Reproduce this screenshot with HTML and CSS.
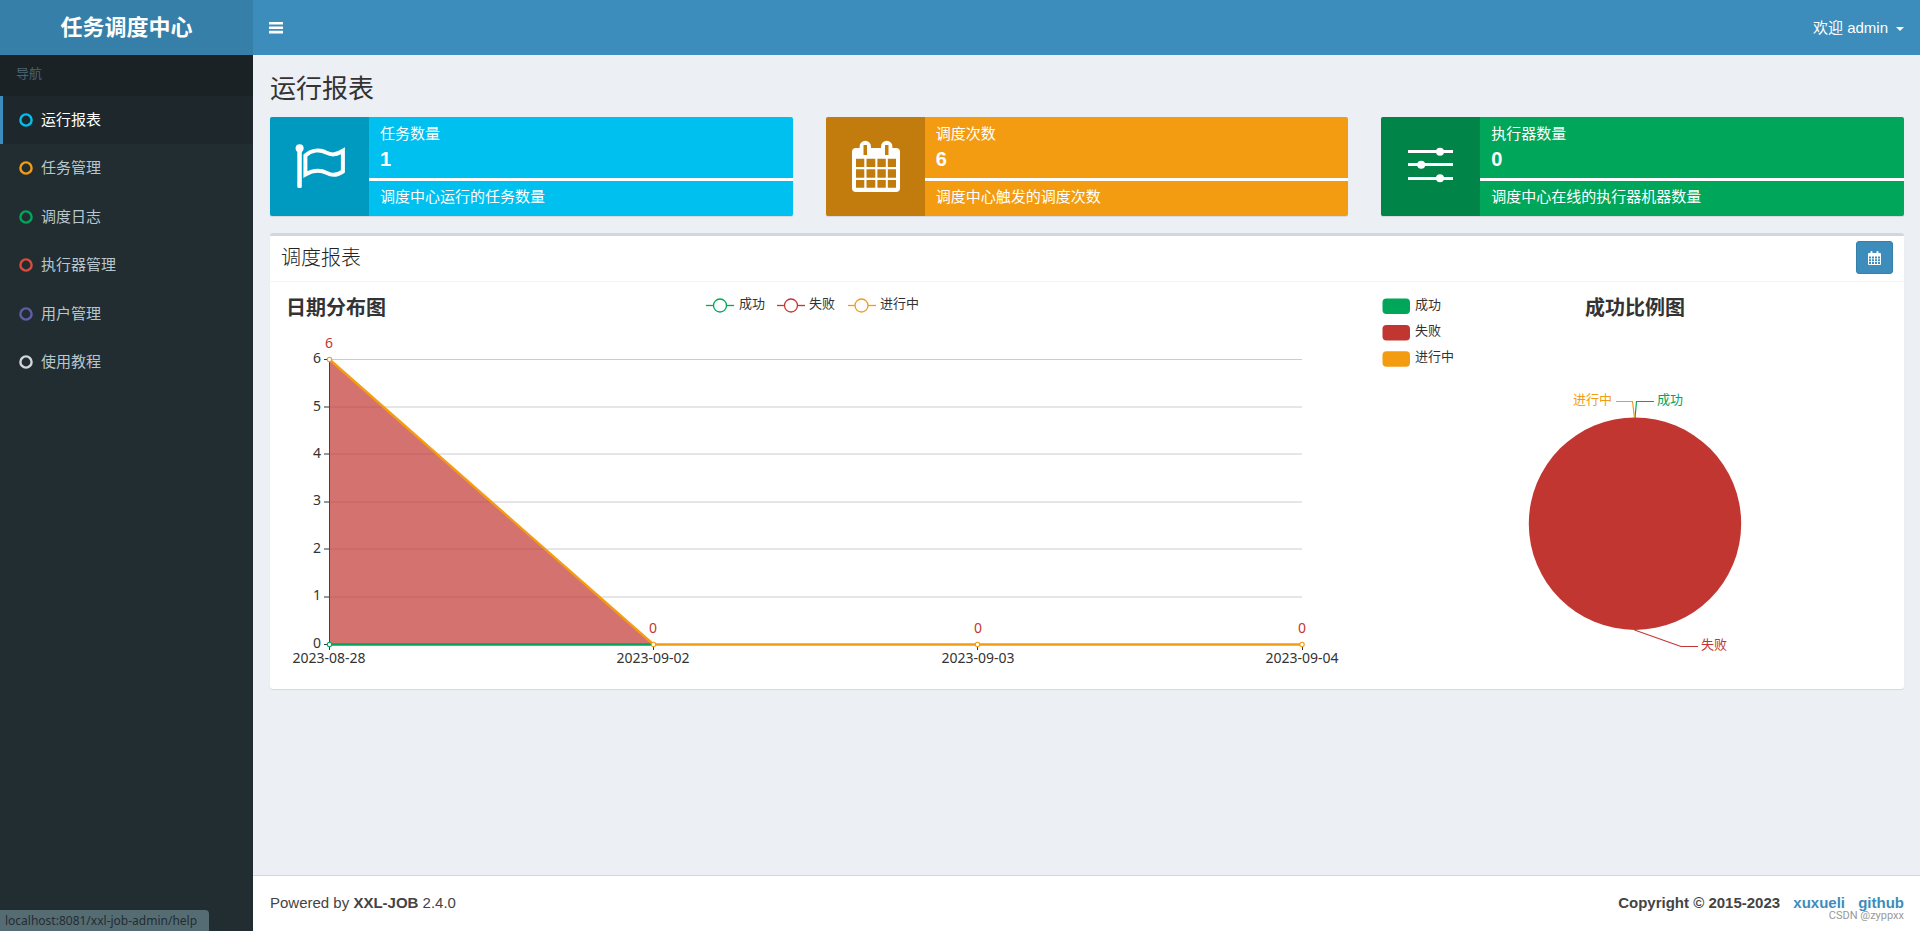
FILE: index.html
```html
<!DOCTYPE html>
<html lang="zh-CN">
<head>
<meta charset="utf-8">
<title>任务调度中心</title>
<link rel="stylesheet" href="styles.css">
</head>
<body>
<div class="wrapper">
  <aside class="sidebar">
    <a class="logo" href="#">任务调度中心</a>
    <div class="nav-header">导航</div>
    <ul class="menu">
      <li><a class="active" href="#"><svg class="dot aqua" viewBox="0 0 14 14"><circle cx="7" cy="7" r="5.600"/></svg>运行报表</a></li>
      <li><a href="#"><svg class="dot yellow" viewBox="0 0 14 14"><circle cx="7" cy="7" r="5.600"/></svg>任务管理</a></li>
      <li><a href="#"><svg class="dot green" viewBox="0 0 14 14"><circle cx="7" cy="7" r="5.600"/></svg>调度日志</a></li>
      <li><a href="#"><svg class="dot red" viewBox="0 0 14 14"><circle cx="7" cy="7" r="5.600"/></svg>执行器管理</a></li>
      <li><a href="#"><svg class="dot purple" viewBox="0 0 14 14"><circle cx="7" cy="7" r="5.600"/></svg>用户管理</a></li>
      <li><a href="#"><svg class="dot gray" viewBox="0 0 14 14"><circle cx="7" cy="7" r="5.600"/></svg>使用教程</a></li>
    </ul>
  </aside>
  <div class="main">
    <header class="topbar">
      <button class="toggle" type="button" aria-label="切换导航">
        <svg width="14" height="12" viewBox="0 0 14 12"><path d="M0 0h14v2.600H0zM0 4.400h14V7H0zM0 8.800h14v2.600H0z" fill="#fff"/></svg>
      </button>
      <button class="user" type="button">欢迎 admin <span class="caret"></span></button>
    </header>
    <main class="content">
      <h1>运行报表</h1>
      <section class="cards">
        <article class="card card-aqua">
          <div class="card-icon">
            <svg viewBox="0 0 99 99"><circle cx="29.600" cy="31.300" r="4"/><path d="M27.300 31h4.500v38.500a1.500 1.500 0 0 1-1.500 1.500h-1.500a1.500 1.500 0 0 1-1.500-1.500z"/><path d="M35.400 57.500V38.500C41 33 50 32 56 35.500C62 38.500 66 38 72.900 33.800V54.500C67 58.500 62 58.800 57 56C50 52.500 43 53 35.400 57.500Z" fill="none" stroke="#fff" stroke-width="4"/></svg>
          </div>
          <div class="card-body">
            <div class="card-stat"><span>任务数量</span><strong>1</strong></div>
            <p>调度中心运行的任务数量</p>
          </div>
        </article>
        <article class="card card-yellow">
          <div class="card-icon">
            <svg viewBox="0 0 99 99"><path fill-rule="evenodd" d="M30 31h3.600v-1.500a5.700 5.700 0 0 1 11.400 0V31h10v-1.500a5.700 5.700 0 0 1 11.400 0V31H70a4 4 0 0 1 4 4v36a4 4 0 0 1-4 4H30a4 4 0 0 1-4-4V35a4 4 0 0 1 4-4zM37.500 28v10H41V28zM59 28v10h3.500V28zM30 41.700V50h8.300v-8.300zM40.500 41.700V50h8.800v-8.300zM51.400 41.700V50h8.400v-8.300zM61.800 41.700V50H70v-8.300zM30 52.200v8.500h8.300v-8.500zM40.500 52.200v8.500h8.800v-8.500zM51.400 52.200v8.500h8.400v-8.500zM61.800 52.200v8.500H70v-8.500zM30 63v7.700h8.300V63zM40.500 63v7.700h8.800V63zM51.400 63v7.700h8.400V63zM61.800 63v7.700H70V63z"/></svg>
          </div>
          <div class="card-body">
            <div class="card-stat"><span>调度次数</span><strong>6</strong></div>
            <p>调度中心触发的调度次数</p>
          </div>
        </article>
        <article class="card card-green">
          <div class="card-icon">
            <svg viewBox="0 0 99 99"><path d="M27 33h45v3H27zM27 46h45v3H27zM27 60h45v3H27z"/><circle cx="59" cy="34.700" r="4"/><circle cx="40.200" cy="47.700" r="4"/><circle cx="59" cy="61.200" r="4"/></svg>
          </div>
          <div class="card-body">
            <div class="card-stat"><span>执行器数量</span><strong>0</strong></div>
            <p>调度中心在线的执行器机器数量</p>
          </div>
        </article>
      </section>
      <section class="box">
        <div class="box-header">
          <h3>调度报表</h3>
          <button class="date-btn" type="button" aria-label="选择日期">
            <svg width="13" height="14" viewBox="0 0 13 14"><path fill="#fff" fill-rule="evenodd" d="M1 2h1.500V1a1 1 0 0 1 2 0v1h4V1a1 1 0 0 1 2 0v1H12a1 1 0 0 1 1 1v10a1 1 0 0 1-1 1H1a1 1 0 0 1-1-1V3a1 1 0 0 1 1-1zM1 5.500v2h2v-2zM4 5.500v2h2v-2zM7 5.500v2h2v-2zM10 5.500v2h2v-2zM1 8.300v2h2v-2zM4 8.300v2h2v-2zM7 8.300v2h2v-2zM10 8.300v2h2v-2zM1 11v2h2v-2zM4 11v2h2v-2zM7 11v2h2v-2zM10 11v2h2v-2z"/></svg>
          </button>
        </div>
        <div class="charts">
          <svg class="chart chart-line" viewBox="0 0 1089 407" role="img" aria-label="日期分布图">
            <text class="title" x="16" y="33">日期分布图</text>
            <g class="legend">
              <g fill="#fff" stroke-width="1.300">
                <g stroke="#00a65a"><path d="M436 23.500h28"/><circle cx="450" cy="23.500" r="6.500"/></g>
                <g stroke="#c23632"><path d="M507 23.500h28"/><circle cx="521" cy="23.500" r="6.500"/></g>
                <g stroke="#f39c12"><path d="M578 23.500h28"/><circle cx="591.500" cy="23.500" r="6.500"/></g>
              </g>
              <text x="469" y="26">成功</text><text x="539" y="26">失败</text><text x="610" y="26">进行中</text>
            </g>
            <path d="M59 77.500H1032M59 125H1032M59 172H1032M59 220H1032M59 267H1032M59 315H1032" stroke="#ccc" fill="none"/>
            <path d="M59.500 77v286M54 77.500h5M54 125h5M54 172h5M54 220h5M54 267h5M54 315h5M54 362.500h978M59.500 362v6M383.500 362v6M707.500 362v6M1032.500 362v6" stroke="#333" fill="none"/>
            <path d="M59.500 77.500L383.500 362.500H59.500Z" fill="#c23632" fill-opacity=".7"/>
            <path d="M59.500 362.500H383.500" stroke="#00a65a" stroke-width="2.400"/>
            <path d="M59.500 77.500L383.500 362.500H1032" stroke="#f39c12" stroke-width="2.400" fill="none"/>
            <g fill="#fff" stroke="#f39c12" stroke-width="1.100"><circle cx="59.500" cy="77.500" r="2.200"/><circle cx="383.500" cy="362.500" r="2.200"/><circle cx="707.500" cy="362.500" r="2.200"/><circle cx="1032" cy="362.500" r="2.200"/><circle cx="59.500" cy="362.500" r="2.200" stroke="#00a65a"/></g>
            <g class="axis" text-anchor="end"><text x="51" y="81">6</text><text x="51" y="129">5</text><text x="51" y="176">4</text><text x="51" y="223">3</text><text x="51" y="271">2</text><text x="51" y="318">1</text><text x="51" y="366">0</text></g>
            <g class="axis" text-anchor="middle"><text x="59" y="381">2023-08-28</text><text x="383" y="381">2023-09-02</text><text x="708" y="381">2023-09-03</text><text x="1032" y="381">2023-09-04</text></g>
            <g class="axis value" text-anchor="middle"><text x="59" y="66">6</text><text x="383" y="351">0</text><text x="708" y="351">0</text><text x="1032" y="351">0</text></g>
          </svg>
          <svg class="chart chart-pie" viewBox="0 0 545 407" role="img" aria-label="成功比例图">
            <text class="title" x="276" y="33" text-anchor="middle">成功比例图</text>
            <g class="legend">
              <rect x="23.500" y="16.500" width="27.500" height="15.500" rx="4" fill="#00a65a"/>
              <rect x="23.500" y="43" width="27.500" height="15.500" rx="4" fill="#c23632"/>
              <rect x="23.500" y="69.300" width="27.500" height="15.500" rx="4" fill="#f39c12"/>
              <text x="56" y="27">成功</text><text x="56" y="53">失败</text><text x="56" y="79">进行中</text>
            </g>
            <g fill="none" stroke-width="1.200">
              <path d="M276 136L277.500 119.500H295" stroke="#00a65a"/>
              <path d="M275.500 136L273.500 119.500H257" stroke="#f39c12"/>
              <path d="M275.500 348L322 364.500H339" stroke="#c23632"/>
            </g>
            <circle cx="276" cy="241.700" r="106.200" fill="#c23632"/>
            <g class="legend">
              <text class="pending" x="214" y="122">进行中</text>
              <text class="success" x="298" y="122">成功</text>
              <text class="failed" x="342" y="367">失败</text>
            </g>
          </svg>
        </div>
      </section>
    </main>
    <footer class="footer">
      <span>Powered by <b>XXL-JOB</b> 2.4.0</span>
      <span class="copyright">Copyright © 2015-2023 <a href="#">xuxueli</a> <a href="#">github</a></span>
      <span class="watermark">CSDN @zyppxx</span>
    </footer>
  </div>
  <div class="status">localhost:8081/xxl-job-admin/help</div>
</div>
</body>
</html>
```
FILE: styles.css
```css
* { box-sizing: border-box; }

body {
  margin: 0;
  font: 15px/22px "Liberation Sans", "Noto Sans CJK SC", sans-serif;
  color: #333;
  background: #ecf0f5;
}

a { color: #3c8dbc; text-decoration: none; }
button { font: inherit; border: 0; cursor: pointer; }

.wrapper {
  display: grid;
  grid-template-columns: 253px 1fr;
  min-height: 100vh;
}

/* Sidebar */
.sidebar { background: #222d32; }

.logo {
  display: block;
  background: #367fa9;
  color: #fff;
  font-size: 22px;
  font-weight: 700;
  line-height: 55px;
  text-align: center;
}

.nav-header {
  padding: 0 16px 3px;
  background: #1a2226;
  color: #4b646f;
  font-size: 13px;
  line-height: 38px;
}

.menu { list-style: none; margin: 0; padding: 0; }
.menu li:nth-child(even) { margin-bottom: 1px; }

.menu a {
  display: flex;
  align-items: center;
  gap: 8px;
  height: 48px;
  padding-left: 16px;
  border-left: 3px solid transparent;
  color: #b8c7ce;
}

.menu .active { background: #1e282c; border-left-color: #3c8dbc; color: #fff; }

.dot { width: 14px; height: 14px; fill: none; stroke: currentColor; stroke-width: 2.4; }

.aqua { color: #00c0ef; }
.yellow { color: #f39c12; }
.green { color: #00a65a; }
.red { color: #dd4b39; }
.purple { color: #605ca8; }
.gray { color: #d2d6de; }

/* Top bar */
.main { display: flex; flex-direction: column; min-width: 0; }

.topbar {
  display: flex;
  justify-content: space-between;
  height: 55px;
  background: #3c8dbc;
}

.toggle { display: flex; align-items: center; padding: 0 16px; background: none; }

.user {
  display: flex;
  align-items: center;
  gap: 8px;
  padding: 0 16px;
  background: none;
  color: #fff;
}

.caret { border: 4px solid transparent; border-top-color: #fff; border-bottom: 0; margin-top: 3px; }

/* Content */
.content { flex: 1; padding: 18px 16px 17px 17px; }

h1 { margin: 0 0 12px; font-size: 26px; font-weight: 400; line-height: 32px; }

.cards {
  display: grid;
  grid-template-columns: repeat(3, 1fr);
  gap: 33px;
  margin-bottom: 17px;
}

.card {
  display: flex;
  min-height: 99px;
  border-radius: 2px;
  overflow: hidden;
  color: #fff;
  box-shadow: 0 1px 1px rgba(0, 0, 0, .1);
}

.card-aqua { background: #00c0ef; }
.card-yellow { background: #f39c12; }
.card-green { background: #00a65a; }

.card-icon { flex: none; width: 99px; background: rgba(0, 0, 0, .2); }
.card-icon svg { display: block; fill: #fff; }
.card-body { flex: 1; }

.card-stat {
  display: flex;
  flex-direction: column;
  height: 64px;
  padding: 6px 11px 0;
  border-bottom: 3px solid #fff;
}

.card-stat strong { font-size: 20px; line-height: 28px; }
.card p { margin: 0; padding: 5px 11px; }

.box {
  background: #fff;
  border-top: 3px solid #d2d6de;
  border-radius: 3px;
  box-shadow: 0 1px 1px rgba(0, 0, 0, .1);
}

.box-header {
  display: flex;
  justify-content: space-between;
  align-items: flex-start;
  padding: 5px 11px 7px;
  border-bottom: 1px solid #f4f4f4;
}

h3 { margin: 6px 0 0; font-size: 20px; font-weight: 300; line-height: 22px; color: #222; }

.date-btn {
  display: flex;
  align-items: center;
  justify-content: center;
  width: 37px;
  height: 33px;
  border: 1px solid #367fa9;
  border-radius: 3px;
  background: #3c8dbc;
}

/* Charts */
.charts { display: flex; }
.chart { display: block; min-width: 0; }
.chart-line { flex: 1089 1 0; }
.chart-pie { flex: 545 1 0; }
.chart text { fill: #333; font-family: "Noto Sans CJK SC", sans-serif; }
.chart .title { font-size: 20px; font-weight: 700; }
.chart .legend text { font-size: 13px; }
.chart .axis text { font-family: "Noto Sans", sans-serif; font-size: 14px; }
.chart .value text, .chart .legend .failed { fill: #c23632; }
.chart .legend .pending { fill: #f39c12; }
.chart .legend .success { fill: #00a65a; }

/* Footer */
.footer {
  position: relative;
  display: flex;
  justify-content: space-between;
  padding: 16px 16px 17px 17px;
  border-top: 1px solid #d2d6de;
  background: #fff;
  color: #444;
}

.copyright { font-weight: 700; }
.copyright a { margin-left: 9px; }

.watermark {
  position: absolute;
  right: 16px;
  bottom: 8px;
  color: #999;
  font: 11px/14px Roboto, sans-serif;
}

.status {
  position: fixed;
  left: 0;
  bottom: 0;
  padding: 0 12px 0 5px;
  border-top-right-radius: 4px;
  background: #566c73;
  color: #222d32;
  font: 12px/21px "Noto Sans", sans-serif;
}
```
